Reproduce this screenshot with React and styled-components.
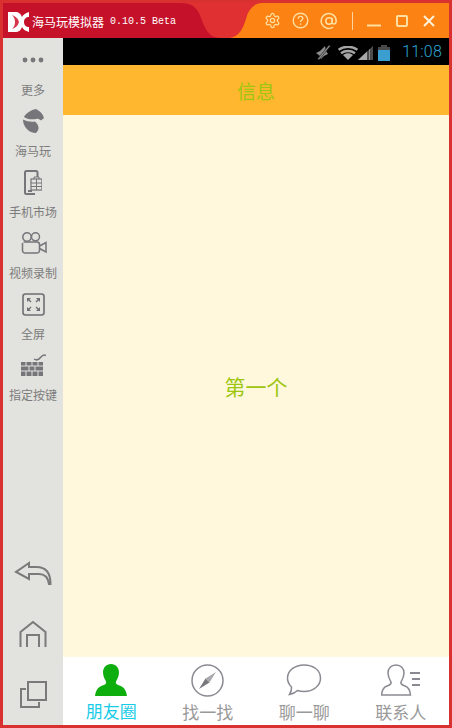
import React from "react";
import styled, { createGlobalStyle } from "styled-components";

const CJK = `"Noto Sans CJK SC", "Liberation Sans", sans-serif`;

const Global = createGlobalStyle`
  html, body { margin: 0; padding: 0; background: #fff; }
  * { box-sizing: border-box; }
`;

const Frame = styled.div`
  width: 452px; height: 728px; background: #d93030; display: flex; flex-direction: column;
  padding: 3px; overflow: hidden; font-family: ${CJK};
`;
const TitleBar = styled.header`height: 35px; display: flex; flex: none;`;
const BrandTab = styled.div`
  width: 177px; background: #c5122a; display: flex; align-items: center; gap: 3px; padding: 2px 0 0 5px; color: #fff;
`;
const BrandName = styled.span`font-size: 12px; white-space: nowrap;`;
const Version = styled.span`font-family: "Liberation Mono", monospace; font-size: 10px; margin-left: 3px; white-space: nowrap;`;
const Curve = styled.svg`display: block; flex: none; background: #e03032;`;
const Spacer = styled.div`width: 10px; flex: none; background: #e03032;`;
const Controls = styled.div`
  flex: 1; background: #fb8213; display: flex; align-items: center; color: #ffdf9f;
`;
const CtlIcon = styled.svg`display: block; flex: none; margin-left: ${p => p.$ml || 0}px;`;
const Divider = styled.div`width: 1px; height: 18px; background: #fbd6a0; margin-left: 14px;`;
const Body = styled.div`flex: 1; display: flex; min-height: 0;`;
const Sidebar = styled.aside`
  width: 60px; flex: none; background: #e2e2de; display: flex; flex-direction: column; align-items: center; padding-top: 7px;
`;
const SideItem = styled.div`
  height: 61px; width: 100%; flex: none; display: flex; flex-direction: column; align-items: center;
`;
const SideIconBox = styled.div`height: 30px; display: flex; align-items: center; justify-content: center;`;
const SideLabel = styled.div`font-size: 12px; line-height: 16px; color: #7c7c7c; margin-top: 7px; white-space: nowrap;`;
const SideBottom = styled.div`margin-top: auto; display: flex; flex-direction: column; align-items: center;`;
const NavKey = styled.div`height: 61px; display: flex; align-items: center; justify-content: center;`;
const Phone = styled.main`flex: 1; display: flex; flex-direction: column; min-width: 0;`;
const StatusBar = styled.div`
  height: 27px; flex: none; background: #000; display: flex; align-items: center; justify-content: flex-end; padding-right: 7px;
`;
const StatusIcon = styled.svg`display: block; flex: none; margin: 2px ${p => p.$mr || 0}px 0 0;`;
const Clock = styled.span`font-family: Roboto, sans-serif; font-weight: 300; font-size: 16px; color: #2fa6d4; margin-left: 12px; letter-spacing: .2px;`;
const AppBar = styled.div`
  height: 50px; flex: none; background: #ffb72f; color: #9dc60e; font-size: 19px;
  display: flex; align-items: center; justify-content: center;
`;
const Content = styled.div`
  flex: 1; background: #fff8dc; color: #9dc60e; font-size: 21px; display: flex; align-items: center; justify-content: center;
`;
const TabBar = styled.nav`height: 68px; flex: none; background: #fff; display: grid; grid-template-columns: repeat(4, 1fr);`;
const Tab = styled.div`display: flex; flex-direction: column; align-items: center; color: ${p => p.$active ? "#18cbe8" : "#999"}; font-size: 17px;`;
const TabIcon = styled.svg`display: block; margin-top: 7px; flex: none;`;
const TabLabel = styled.span`line-height: 20px; margin-top: 5px;`;

const Logo = () => (
  <svg width="21" height="20" viewBox="0 0 21 20">
    <path d="M0 0h7c4 0 6 2 7 5 1-2 3-4 7-5v5c-3 0-5 2-5 5s2 5 5 5v5c-4-1-6-3-7-5-1 3-3 5-7 5H0z" fill="#fff" />
    <path d="M4 3c3 1 6 3 7 7-1 4-4 6-7 7 2-2 3-4 3-7s-1-5-3-7z" fill="#d4364c" />
  </svg>
);

const Gear = () => (
  <CtlIcon $ml={2} width="17" height="17" viewBox="0 0 24 24" fill="none" stroke="currentColor" strokeWidth="1.8" strokeLinejoin="round">
    <path d="M12.2 2h-.4a2 2 0 0 0-2 2v.2a2 2 0 0 1-1 1.7l-.4.3a2 2 0 0 1-2 0l-.2-.1a2 2 0 0 0-2.7.7l-.2.4a2 2 0 0 0 .7 2.7l.2.1a2 2 0 0 1 1 1.7v.5a2 2 0 0 1-1 1.8l-.2.1a2 2 0 0 0-.7 2.7l.2.4a2 2 0 0 0 2.7.7l.2-.1a2 2 0 0 1 2 0l.4.3a2 2 0 0 1 1 1.7v.2a2 2 0 0 0 2 2h.4a2 2 0 0 0 2-2v-.2a2 2 0 0 1 1-1.7l.4-.3a2 2 0 0 1 2 0l.2.1a2 2 0 0 0 2.7-.7l.2-.4a2 2 0 0 0-.7-2.7l-.2-.1a2 2 0 0 1-1-1.8v-.5a2 2 0 0 1 1-1.7l.2-.1a2 2 0 0 0 .7-2.7l-.2-.4a2 2 0 0 0-2.7-.7l-.2.1a2 2 0 0 1-2 0l-.4-.3a2 2 0 0 1-1-1.7V4a2 2 0 0 0-2-2z" />
    <circle cx="12" cy="12" r="3" />
  </CtlIcon>
);

const Help = () => (
  <CtlIcon $ml={11} width="17" height="17" viewBox="0 0 17 17" fill="none" stroke="currentColor" strokeWidth="1.4">
    <circle cx="8.5" cy="8.5" r="7.3" />
    <path d="M6.2 6.6c.1-1.5 1.1-2.2 2.3-2.2 1.3 0 2.3.8 2.3 2 0 1.6-2.3 1.8-2.3 3.7" />
    <path d="M8.5 11.4v1.5" />
  </CtlIcon>
);

const At = () => (
  <CtlIcon $ml={11} width="18" height="18" viewBox="0 0 18 18" fill="none" stroke="currentColor" strokeWidth="1.5">
    <circle cx="9" cy="9" r="3.2" />
    <path d="M12.2 5.8v4.6c0 2.4 4 2.2 4-1.4a7.5 7.5 0 1 0-3 6" />
  </CtlIcon>
);

const Minimize = () => (
  <CtlIcon $ml={14} width="14" height="14" viewBox="0 0 14 14"><path d="M0 11.500h14" stroke="currentColor" strokeWidth="2" /></CtlIcon>
);
const Maximize = () => (
  <CtlIcon $ml={15} width="12" height="12" viewBox="0 0 12 12" fill="none"><rect x="1" y="1" width="10" height="10" rx="1" stroke="currentColor" strokeWidth="2" /></CtlIcon>
);
const CloseX = () => (
  <CtlIcon $ml={15} width="12" height="12" viewBox="0 0 12 12"><path d="M1 1l10 10M11 1L1 11" stroke="#fff1d8" strokeWidth="2" /></CtlIcon>
);

const Dots = () => (
  <svg width="24" height="6" viewBox="0 0 24 6" fill="#77777a"><circle cx="4" cy="3" r="2.400" /><circle cx="12" cy="3" r="2.400" /><circle cx="20" cy="3" r="2.400" /></svg>
);
const Horse = () => (
  <svg width="21" height="24" viewBox="0 0 21 24" fill="#75757a">
    <path d="M1 8C3 4 8 1 13 0c4 2 7 5 8 9l-3 2.500c-2-1.500-3-2-5-1.500-4 .5-9 .5-12-2z" />
    <path d="M0 10.500c4 2 8 2.500 12 2 2 2 3.500 4 3.500 6.500 0 2-1 3.500-2.500 5C6 24 0 18 0 10.500z" />
  </svg>
);
const Market = () => (
  <svg width="18" height="25" viewBox="0 0 18 25" fill="none" stroke="#75757a">
    <path d="M11 24H2.500A1.500 1.500 0 0 1 1 22.500v-20A1.500 1.500 0 0 1 2.500 1h9.500A1.500 1.500 0 0 1 13.500 2.500V7" strokeWidth="2" />
    <path d="M4 21h4" strokeWidth="2" />
    <rect x="7" y="9" width="11" height="11" fill="#e2e2de" stroke="#75757a" strokeWidth="1.200" />
    <path d="M10 9V7h5v2M7 13h11M7 16.500h11M12.500 9v11" stroke="#75757a" strokeWidth="1" />
  </svg>
);
const Video = () => (
  <svg width="27" height="22" viewBox="0 0 27 22" fill="none" stroke="#75757a" strokeWidth="1.500">
    <circle cx="7" cy="5" r="4.200" /><circle cx="15.500" cy="4.800" r="4" />
    <path d="M3.500 10H17a2.500 2.500 0 0 1 2.500 2.500v6A2.500 2.500 0 0 1 17 21H5a2.500 2.500 0 0 1-2.500-2.500V11" />
    <path d="M19.500 14l6.500-3.500V20l-6.500-3.500" />
  </svg>
);
const Full = () => (
  <svg width="23" height="23" viewBox="0 0 23 23" fill="none" stroke="#6f6f73">
    <rect x="1" y="1" width="21" height="21" rx="2.500" strokeWidth="1.600" />
    <path d="M6 6l3 3M17 6l-3 3M6 17l3-3M17 17l-3-3" strokeWidth="1.400" />
    <path d="M5 5h4L5 9zM18 5h-4l4 4zM5 18h4l-4-4zM18 18h-4l4-4z" fill="#6f6f73" stroke="none" />
  </svg>
);
const Keys = () => (
  <svg width="25" height="23" viewBox="0 0 25 23" fill="#75757a">
    <path d="M13 5c3 2 5 .5 6.500-1.500S22.500 0 25 1.500" fill="none" stroke="#75757a" strokeWidth="1.500" />
    <path d="M0 8h22v14H0z" />
    <path d="M0 12h22M0 17h22M5 8v4M11 8v4M17 8v4M8 12v5M14 12v5M5 17v5M11 17v5M17 17v5" stroke="#e2e2de" strokeWidth="1" />
  </svg>
);
const Back = () => (
  <svg width="38" height="24" viewBox="0 0 38 24" fill="none" stroke="#7a7a7a" strokeWidth="2">
    <path d="M15 2L2 11l13 7v-5h10c5 0 9 3 10 10h1.500c0-12-5-17-14-17H15z" />
  </svg>
);
const Home = () => (
  <svg width="28" height="28" viewBox="0 0 28 28" fill="none" stroke="#7a7a7a" strokeWidth="2">
    <path d="M1.500 27V12L14 2l12.500 10v15" />
    <path d="M8 27V15h12v12" />
  </svg>
);
const Recent = () => (
  <svg width="27" height="27" viewBox="0 0 27 27" fill="none" stroke="#7a7a7a" strokeWidth="2">
    <rect x="8" y="1" width="18" height="18" />
    <path d="M6 8H1v18h18v-5" />
  </svg>
);

const Muted = () => (
  <StatusIcon $mr={7} width="15" height="15" viewBox="0 0 15 15" fill="#8b8b8b">
    <path d="M0 8l4-2 5-5 1 5 2 3-2 1-2 1-3 3-2-1 1-2z" />
    <path d="M13 0l1.500 1L3 15l-1.500-1z" stroke="#000" strokeWidth=".5" />
  </StatusIcon>
);
const Wifi = () => (
  <StatusIcon width="20" height="14" viewBox="0 0 20 14" fill="none" stroke="#a5a5a5" strokeWidth="2.400">
    <path d="M.5 3.800c5.500-4 13.500-4 19 0M3 7.200c4-3 10-3 14 0" />
    <path d="M5 9c3-2.200 7-2.200 10 0l-5 5z" fill="#a5a5a5" stroke="none" />
  </StatusIcon>
);
const Signal = () => (
  <StatusIcon $mr={5} width="15" height="14" viewBox="0 0 15 14">
    <path d="M0 14L15 0v14z" fill="#4c4c4c" />
    <path d="M0 14l9-8.500V14z" fill="#a8a8a8" />
    <path d="M11 3.500V14h1V3z" fill="#8a8a8a" />
  </StatusIcon>
);
const Battery = () => (
  <StatusIcon width="12" height="16" viewBox="0 0 12 16">
    <rect x="3" y="0" width="6" height="2" fill="#4a4a4a" />
    <rect x="0" y="2" width="12" height="4" fill="#4a4a4a" />
    <rect x="0" y="5" width="12" height="11" fill="#3a9fd0" />
  </StatusIcon>
);

const Friends = () => (
  <TabIcon width="32" height="32" viewBox="0 0 32 32" fill="#0fae0f">
    <path d="M16 0c5 0 8 4 8 8.500 0 4-2 7-3 9-.6 2 .5 3 3.500 4 3.500 1.200 6.500 3.500 7.500 10.500H0c1-7 4-9.300 7.500-10.500 3-1 4.100-2 3.500-4-1-2-3-5-3-9C8 4 11 0 16 0z" />
  </TabIcon>
);
const Compass = () => (
  <TabIcon width="33" height="33" viewBox="0 0 33 33" fill="none">
    <circle cx="16.500" cy="16.500" r="15.500" stroke="#8a8a92" strokeWidth="1.500" />
    <path d="M25 8L18.500 18.500l-4-4z" fill="#a9a9af" />
    <path d="M8 25l6.500-10.500 4 4z" fill="#77777d" />
  </TabIcon>
);
const Chat = () => (
  <TabIcon width="36" height="33" viewBox="0 0 36 33" fill="none" stroke="#8a8a92" strokeWidth="1.500">
    <path d="M18 1C9 1 1.500 6.500 1.500 14c0 3.500 1.500 6.500 4 9 .5 3-.5 5-2 7.500 3-.5 6-2 8-4 2 .7 4.300 1 6.500 1 9 0 16.500-5.500 16.500-13.500S27 1 18 1z" />
  </TabIcon>
);
const Contacts = () => (
  <TabIcon width="40" height="33" viewBox="0 0 40 33" fill="none" stroke="#8a8a92" strokeWidth="1.500">
    <path d="M15 1c-5 0-8 3.500-8 8 0 4 2 7 3 9 .6 2-1 3-4 4-3 1-5 3.500-5.500 9h29c-.5-5.500-2.500-8-5.500-9-3-1-4.600-2-4-4 1-2 3-5 3-9 0-4.500-3-8-8-8z" />
    <path d="M29 9h10M31 15h8M31 21h8" strokeWidth="2" />
  </TabIcon>
);

const sideItems = [
  { label: "更多", icon: <Dots /> },
  { label: "海马玩", icon: <Horse /> },
  { label: "手机市场", icon: <Market /> },
  { label: "视频录制", icon: <Video /> },
  { label: "全屏", icon: <Full /> },
  { label: "指定按键", icon: <Keys /> },
];
const tabs = [
  { label: "朋友圈", icon: <Friends />, active: true },
  { label: "找一找", icon: <Compass /> },
  { label: "聊一聊", icon: <Chat /> },
  { label: "联系人", icon: <Contacts /> },
];

export default function App() {
  return (
    <Frame>
      <Global />
      <TitleBar>
        <BrandTab>
          <Logo />
          <BrandName>海马玩模拟器</BrandName>
          <Version>0.10.5 Beta</Version>
        </BrandTab>
        <Curve width="40" height="35" viewBox="0 0 40 35">
          <path d="M0 0c12 0 16 4 20 12 4 11 8 23 20 23H0z" fill="#c5122a" />
        </Curve>
        <Spacer />
        <Curve width="32" height="35" viewBox="0 0 32 35">
          <path d="M32 0v35H0c10-2 13-10 16-19C18 7 24 0 32 0z" fill="#fb8213" />
        </Curve>
        <Controls>
          <Gear /><Help /><At />
          <Divider />
          <Minimize /><Maximize /><CloseX />
        </Controls>
      </TitleBar>
      <Body>
        <Sidebar>
          {sideItems.map((s) => (
            <SideItem key={s.label}>
              <SideIconBox>{s.icon}</SideIconBox>
              <SideLabel>{s.label}</SideLabel>
            </SideItem>
          ))}
          <SideBottom>
            <NavKey><Back /></NavKey>
            <NavKey><Home /></NavKey>
            <NavKey><Recent /></NavKey>
          </SideBottom>
        </Sidebar>
        <Phone>
          <StatusBar>
            <Muted /><Wifi /><Signal /><Battery /><Clock>11:08</Clock>
          </StatusBar>
          <AppBar>信息</AppBar>
          <Content>第一个</Content>
          <TabBar>
            {tabs.map((t) => (
              <Tab key={t.label} $active={t.active}>
                {t.icon}
                <TabLabel>{t.label}</TabLabel>
              </Tab>
            ))}
          </TabBar>
        </Phone>
      </Body>
    </Frame>
  );
}
